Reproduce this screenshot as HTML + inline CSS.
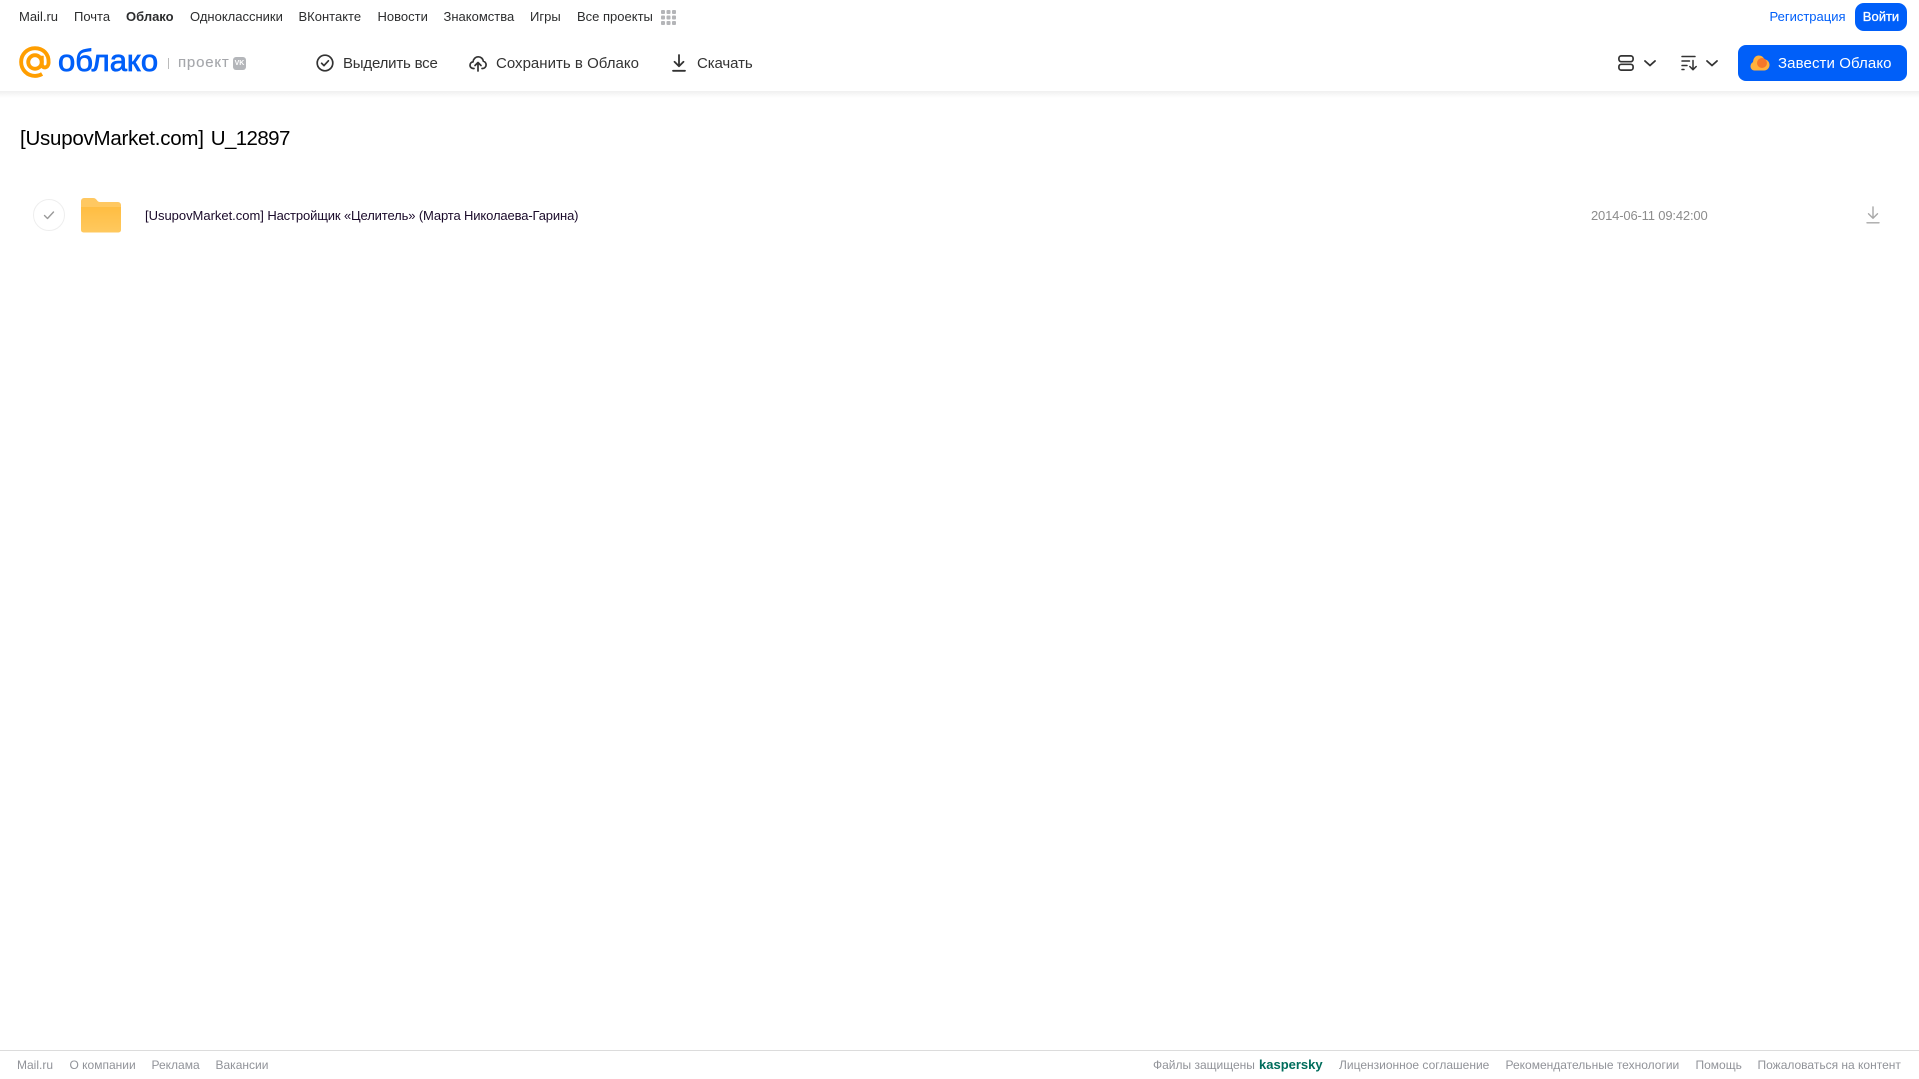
<!DOCTYPE html>
<html lang="ru">
<head>
<meta charset="utf-8">
<title>[UsupovMarket.com] U_12897</title>
<style>
html,body{margin:0;padding:0;background:#fff;width:1919px;height:1079px;overflow:hidden}
body{position:relative;font-family:"Liberation Sans",Arial,sans-serif}
a,span.t,h1{position:absolute;white-space:nowrap;margin:0;text-decoration:none}
svg{position:absolute;overflow:visible}
.shadow{position:absolute;left:0;top:91px;width:1919px;height:7px;background:linear-gradient(#f0f0f0,#fff)}
.n{top:9px;font-size:13px;line-height:16px;color:#2c2d2e}
.tb{top:54px;font-size:15px;line-height:20px;color:#333}
.f{top:1057px;font-size:12px;line-height:16px;color:#919399}
.btn{background:#005ff9;color:#fff;border-radius:8px}
</style>
</head>
<body>
<a class="n" style="left:19px">Mail.ru</a>
<a class="n" style="left:74px">Почта</a>
<a class="n" style="left:126px;font-weight:bold">Облако</a>
<a class="n" style="left:190px">Одноклассники</a>
<a class="n" style="left:298.500px">ВКонтакте</a>
<a class="n" style="left:377.500px">Новости</a>
<a class="n" style="left:443.500px">Знакомства</a>
<a class="n" style="left:530px">Игры</a>
<a class="n" style="left:577px">Все проекты</a>
<svg style="left:661px;top:10px" width="15" height="15" fill="#b4b5b8">
<rect x="0" y="0" width="4" height="4" rx="1"/><rect x="5.500" y="0" width="4" height="4" rx="1"/><rect x="11" y="0" width="4" height="4" rx="1"/>
<rect x="0" y="5.500" width="4" height="4" rx="1"/><rect x="5.500" y="5.500" width="4" height="4" rx="1"/><rect x="11" y="5.500" width="4" height="4" rx="1"/>
<rect x="0" y="11" width="4" height="4" rx="1"/><rect x="5.500" y="11" width="4" height="4" rx="1"/><rect x="11" y="11" width="4" height="4" rx="1"/>
</svg>
<a class="n" style="left:1769.500px;color:#005ff9">Регистрация</a>
<a class="n btn" style="left:1855px;top:3px;width:52px;height:28px;line-height:27px;text-align:center;font-size:13px;border-radius:9px;color:#fff;-webkit-text-stroke:.3px #fff">Войти</a>

<svg style="left:19px;top:46px" width="32" height="33" viewBox="0 0 33 34" fill="none" stroke="#ff9e00" stroke-width="4">
<circle cx="16.500" cy="16.500" r="7"/>
<path d="M23.500 10v8.500c0 5 6.800 5 7-1.500C31 8 24.500 2.200 16.500 2.200 8.500 2.200 2.200 8.500 2.200 16.500S8.500 30.800 16.500 30.800c2.800 0 5.200-.7 7.300-2"/>
</svg>
<span class="t" style="left:58px;top:42px;font-size:31px;line-height:38px;color:#005ff9;-webkit-text-stroke:.8px #005ff9">облако</span>
<div style="position:absolute;left:168px;top:58px;width:1px;height:11px;background:#bbb"></div>
<span class="t" style="left:178px;top:53px;font-size:15px;line-height:20px;color:#a5a7ab;letter-spacing:.8px;-webkit-text-stroke:.12px #a5a7ab">проект</span>
<div style="position:absolute;left:233px;top:57px;width:13px;height:13px;background:#b4b6ba;border-radius:3px;color:#fff;font-size:7px;line-height:13px;text-align:center;font-weight:bold">VK</div>

<svg style="left:316px;top:54px" width="18" height="18" viewBox="0 0 18 18" fill="none" stroke="#333" stroke-width="1.700">
<circle cx="9" cy="9" r="7.800"/><path d="M5.600 9.300l2.400 2.300 4.400-4.800" stroke-linecap="round" stroke-linejoin="round"/>
</svg>
<span class="t tb" style="left:343px;letter-spacing:-.2px">Выделить все</span>
<svg style="left:469px;top:54px" width="18" height="18" viewBox="0 0 18 18" fill="none" stroke="#333" stroke-width="1.700" stroke-linecap="round" stroke-linejoin="round">
<path d="M5 14.500H4.300C2.400 14.500 1 13 1 11.200c0-1.700 1.300-3.100 3-3.300C4.300 5 6.500 2.800 9.300 2.800c2.600 0 4.700 1.900 5 4.400 1.600.4 2.800 1.900 2.800 3.700 0 2-1.600 3.600-3.600 3.600H13"/>
<path d="M9 17V9M6 11.500L9 8.500l3 3"/>
</svg>
<span class="t tb" style="left:496px;letter-spacing:.02px">Сохранить в Облако</span>
<svg style="left:672px;top:54px" width="14" height="18" viewBox="0 0 14 18" fill="none" stroke="#333" stroke-width="1.800" stroke-linecap="round" stroke-linejoin="round">
<path d="M7 1v11M2.500 7.800L7 12.300l4.500-4.500M1 16.800h12"/>
</svg>
<span class="t tb" style="left:697px;letter-spacing:-.1px">Скачать</span>

<svg style="left:1618px;top:55px" width="16" height="16" viewBox="0 0 16 16" fill="none" stroke="#333" stroke-width="1.700">
<rect x=".9" y=".9" width="14.200" height="5.800" rx="2.400"/><rect x=".9" y="9.300" width="14.200" height="5.800" rx="2.400"/>
</svg>
<svg style="left:1644px;top:60px" width="12" height="7" viewBox="0 0 12 7" fill="none" stroke="#333" stroke-width="1.800" stroke-linecap="round" stroke-linejoin="round"><path d="M1 1l5 4.500L11 1"/></svg>
<svg style="left:1681px;top:55px" width="17" height="16" viewBox="0 0 17 16" fill="none" stroke="#333" stroke-width="1.500" stroke-linecap="round" stroke-linejoin="round">
<path d="M1 1.500h13M1 6h7.500M1 10.500h5M1 14.500h2M12 5.500v9M8.800 11.500l3.200 3.200 3.200-3.200"/>
</svg>
<svg style="left:1706px;top:60px" width="12" height="7" viewBox="0 0 12 7" fill="none" stroke="#333" stroke-width="1.800" stroke-linecap="round" stroke-linejoin="round"><path d="M1 1l5 4.500L11 1"/></svg>
<div class="btn" style="position:absolute;left:1738px;top:45px;width:169px;height:36px"></div>
<svg style="left:1750px;top:55px" width="20" height="16" viewBox="0 0 20 16">
<path d="M4.500 15.500C2 15.500 .5 13.500.5 11.300c0-2 1.100-3.500 2.500-4.200C3.300 3.200 5.500.5 8.700.5c2.700 0 4.800 1.500 5.700 3.800 2.900.3 5.100 2.700 5.100 5.600 0 3-2.300 5.600-5.300 5.600z" fill="#ffb13d"/>
<circle cx="12" cy="8" r="5" fill="#f5772b"/>
</svg>
<span class="t tb" style="left:1778px;color:#fff;letter-spacing:.1px">Завести Облако</span>
<div class="shadow"></div>

<h1 style="left:20px;top:126px;font-size:20.500px;line-height:26px;font-weight:normal;color:#000;letter-spacing:-.24px">[UsupovMarket.com]<span style="margin-left:2px;letter-spacing:-.6px"> U_12897</span></h1>

<svg style="left:33px;top:199px" width="32" height="32" viewBox="0 0 32 32" fill="none">
<circle cx="16" cy="16" r="15.500" stroke="#eee"/>
<path d="M11.500 16.500l3 3 6-6.500" stroke="#9a9a9a" stroke-width="1.400" stroke-linecap="round" stroke-linejoin="round"/>
</svg>
<svg style="left:81px;top:198px" width="40" height="35" viewBox="0 0 40 35">
<defs><linearGradient id="fg" x1="0" y1="0" x2="0" y2="1"><stop offset="0" stop-color="#ffbd42"/><stop offset="1" stop-color="#ffc95f"/></linearGradient></defs>
<path d="M0 3a3 3 0 0 1 3-3h9c2 0 3 1 4 2.300.7 1 1.500 1.700 3 1.700h18a3 3 0 0 1 3 3v3H0z" fill="#ffc861"/>
<path d="M0 9h40v23a2.500 2.500 0 0 1-2.500 2.500h-35A2.500 2.500 0 0 1 0 32z" fill="url(#fg)"/>
</svg>
<span class="t" style="left:145px;top:208px;font-size:13px;line-height:16px;color:#1a0a2a;letter-spacing:-.02px">[UsupovMarket.com]<span style="letter-spacing:-.13px"> Настройщик «Целитель» (Марта Николаева-Гарина)</span></span>
<span class="t" style="left:1591px;top:208px;font-size:13px;line-height:16px;color:#8c8c8c;letter-spacing:-.17px">2014-06-11 09:42:00</span>
<svg style="left:1866px;top:206px" width="14" height="18" viewBox="0 0 14 18" fill="none" stroke="#a8a8a8" stroke-width="1.400" stroke-linecap="round" stroke-linejoin="round">
<path d="M7 1v11M2.500 7.800L7 12.300l4.500-4.500M1 16.800h12"/>
</svg>

<div style="position:absolute;left:0;top:1050px;width:1919px;height:1px;background:#dcdcdc"></div>
<a class="f" style="left:17px">Mail.ru</a>
<a class="f" style="left:69.500px">О компании</a>
<a class="f" style="left:151.500px">Реклама</a>
<a class="f" style="left:215.500px">Вакансии</a>
<span class="t f" style="left:1153px">Файлы защищены</span>
<span class="t f" style="left:1259px;color:#006d5c;font-weight:bold;font-size:13px">kaspersky</span>
<a class="f" style="left:1339px">Лицензионное соглашение</a>
<a class="f" style="left:1505.500px">Рекомендательные технологии</a>
<a class="f" style="left:1695.500px">Помощь</a>
<a class="f" style="left:1757.500px">Пожаловаться на контент</a>
</body>
</html>
